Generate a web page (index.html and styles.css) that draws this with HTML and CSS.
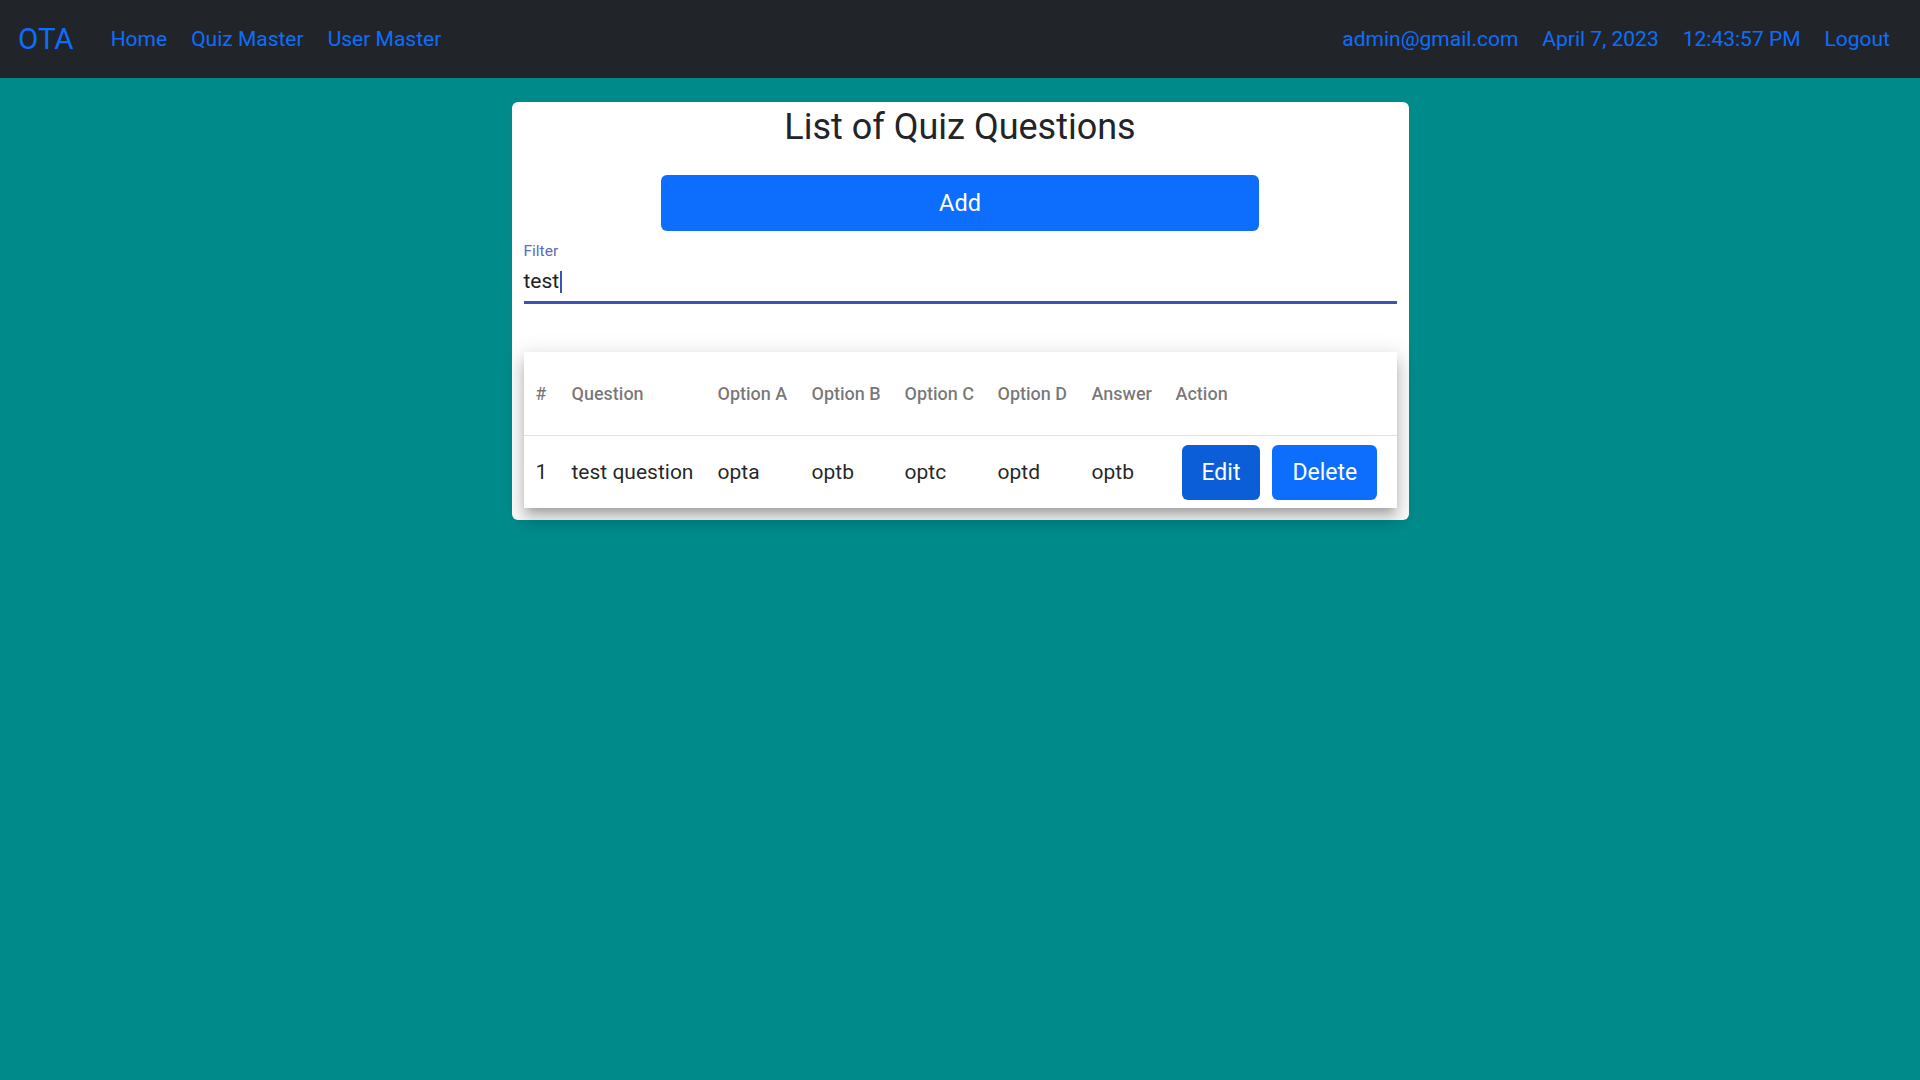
FILE: index.html
```html
<!DOCTYPE html>
<html lang="en">
<head>
<meta charset="utf-8">
<title>OTA - List of Quiz Questions</title>
<link rel="stylesheet" href="styles.css">
</head>
<body>
<nav class="navbar">
  <div class="nav-left">
    <a class="brand" href="#">OTA</a>
    <a class="nav-link" href="#">Home</a>
    <a class="nav-link" href="#">Quiz Master</a>
    <a class="nav-link" href="#">User Master</a>
  </div>
  <div class="nav-right">
    <a class="nav-link" href="#">admin@gmail.com</a>
    <a class="nav-link" href="#">April 7, 2023</a>
    <a class="nav-link" href="#">12:43:57 PM</a>
    <a class="nav-link" href="#">Logout</a>
  </div>
</nav>

<main class="card">
  <h2 class="title">List of Quiz Questions</h2>
  <button class="btn btn-add">Add</button>

  <div class="field">
    <div class="field-label">Filter</div>
    <div class="field-input">test<span class="caret"></span></div>
    <div class="field-line"></div>
  </div>

  <div class="table-card">
    <div class="row head">
      <div class="cell first">#</div>
      <div class="cell">Question</div>
      <div class="cell">Option A</div>
      <div class="cell">Option B</div>
      <div class="cell">Option C</div>
      <div class="cell">Option D</div>
      <div class="cell">Answer</div>
      <div class="cell">Action</div>
    </div>
    <div class="row body">
      <div class="cell first">1</div>
      <div class="cell">test question</div>
      <div class="cell">opta</div>
      <div class="cell">optb</div>
      <div class="cell">optc</div>
      <div class="cell">optd</div>
      <div class="cell">optb</div>
      <div class="cell actions">
        <button class="btn btn-edit">Edit</button>
        <button class="btn btn-delete">Delete</button>
      </div>
    </div>
  </div>
</main>
</body>
</html>
```

FILE: styles.css
```css
* {
  box-sizing: border-box;
}

html, body {
  margin: 0;
  padding: 0;
}

body {
  background: #008b8b;
  font-family: Roboto, "Liberation Sans", Arial, sans-serif;
  min-height: 1080px;
}

.navbar {
  height: 78px;
  background: #212529;
  display: flex;
  align-items: center;
  justify-content: space-between;
  padding: 2px 18px 0 18px;
}

.nav-left,
.nav-right {
  display: flex;
  align-items: center;
}

.brand {
  color: #0d6efd;
  text-decoration: none;
  font-size: 29.5px;
  line-height: 1.2;
  margin-right: 25px;
}

.nav-link {
  color: #0d6efd;
  text-decoration: none;
  font-size: 21px;
  line-height: 1.5;
  padding: 0 12px;
}

.card {
  width: 897px;
  margin: 24px auto 0;
  background: #fff;
  border-radius: 6px;
  padding: 4px 12px 12px;
}

.title {
  margin: 0;
  font-size: 36px;
  font-weight: 400;
  line-height: 1.2;
  text-align: center;
  color: #212529;
}

.btn {
  font-family: Roboto, "Liberation Sans", Arial, sans-serif;
  border: none;
  color: #fff;
  border-radius: 6px;
  cursor: pointer;
}

.btn-add {
  display: block;
  width: 598px;
  height: 56px;
  margin: 26px auto 0;
  background: #0d6efd;
  font-size: 23.5px;
}

.field {
  margin-top: 11px;
}

.field-label {
  font-size: 15.5px;
  line-height: 18.6px;
  color: #5c6bc0;
}

.field-input {
  margin-top: 8.5px;
  font-size: 21px;
  line-height: 25px;
  color: #212121;
  display: flex;
  align-items: center;
}

.caret {
  display: inline-block;
  width: 1.5px;
  height: 22px;
  background: #3f51b5;
  margin-left: 1px;
}

.field-line {
  margin-top: 7px;
  height: 3px;
  background: #3f51b5;
}

.table-card {
  margin-top: 48px;
  background: #fff;
  box-shadow: 0 7px 8px -4px rgba(0, 0, 0, 0.2),
              0 12px 15px 2px rgba(0, 0, 0, 0.14),
              0 4px 21px 3px rgba(0, 0, 0, 0.12);
}

.row {
  display: grid;
  grid-template-columns: 48px 146px 94px 93px 93px 94px 84px 1fr;
  align-items: center;
}

.row.head {
  height: 84px;
  border-bottom: 1px solid rgba(0, 0, 0, 0.12);
  font-size: 18px;
  font-weight: 500;
  color: rgba(0, 0, 0, 0.54);
}

.row.body {
  height: 72px;
  font-size: 21px;
  color: rgba(0, 0, 0, 0.87);
}

.cell {
  white-space: nowrap;
}

.cell.first {
  padding-left: 12px;
}

.actions {
  display: flex;
  align-items: center;
  gap: 12px;
  padding-left: 6px;
}

.btn-edit,
.btn-delete {
  height: 55px;
  padding: 0 20px;
  font-size: 23px;
}

.btn-edit {
  background: #0b5ed7;
}

.btn-delete {
  background: #0d6efd;
}
```
